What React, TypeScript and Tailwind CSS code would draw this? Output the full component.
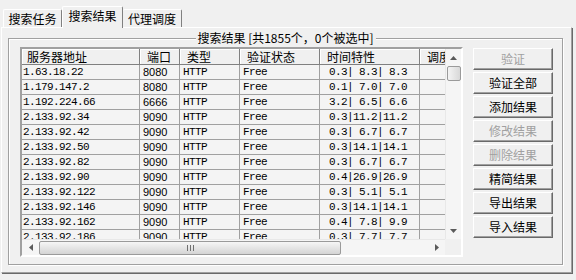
import React from 'react';

type Row = [string, string, string, string, string];

const rows: Row[] = [
  ['1.63.18.22', '8080', 'HTTP', 'Free', '0.3| 8.3| 8.3'],
  ['1.179.147.2', '8080', 'HTTP', 'Free', '0.1| 7.0| 7.0'],
  ['1.192.224.66', '6666', 'HTTP', 'Free', '3.2| 6.5| 6.6'],
  ['2.133.92.34', '9090', 'HTTP', 'Free', '0.3|11.2|11.2'],
  ['2.133.92.42', '9090', 'HTTP', 'Free', '0.3| 6.7| 6.7'],
  ['2.133.92.50', '9090', 'HTTP', 'Free', '0.3|14.1|14.1'],
  ['2.133.92.82', '9090', 'HTTP', 'Free', '0.3| 6.7| 6.7'],
  ['2.133.92.90', '9090', 'HTTP', 'Free', '0.4|26.9|26.9'],
  ['2.133.92.122', '9090', 'HTTP', 'Free', '0.3| 5.1| 5.1'],
  ['2.133.92.146', '9090', 'HTTP', 'Free', '0.3|14.1|14.1'],
  ['2.133.92.162', '9090', 'HTTP', 'Free', '0.4| 7.8| 9.9'],
  ['2.133.92.186', '9090', 'HTTP', 'Free', '0.3| 7.7| 7.7'],
];

const columns = [
  { title: '服务器地址', width: 'w-[118px]', head: 'pl-[5px]', cell: 'pl-[1px]' },
  { title: '端口', width: 'w-[40px]', head: 'pl-[7px]', cell: 'pl-[3px]' },
  { title: '类型', width: 'w-[60px]', head: 'pl-[7px]', cell: 'pl-[3px]' },
  { title: '验证状态', width: 'w-[80px]', head: 'pl-[7px]', cell: 'pl-[3px]' },
  { title: '时间特性', width: 'w-[100px]', head: 'pl-[7px]', cell: 'pl-[9px]' },
  { title: '调度', width: 'w-[60px]', head: 'pl-[7px]', cell: 'pl-[3px]' },
];

const buttons = [
  { label: '验证', disabled: true },
  { label: '验证全部' },
  { label: '添加结果' },
  { label: '修改结果', disabled: true },
  { label: '删除结果', disabled: true },
  { label: '精简结果' },
  { label: '导出结果' },
  { label: '导入结果' },
];

const mono = "font-['Liberation_Mono',monospace] text-[11px] tracking-[-0.6px]";

const Arrow = ({ dir }: { dir: 'up' | 'down' | 'left' | 'right' }) => {
  const pts = {
    up: '0,4 3.5,0 7,4',
    down: '0,0 3.5,4 7,0',
    left: '4,0 0,3.5 4,7',
    right: '0,0 4,3.5 0,7',
  }[dir];
  const vert = dir === 'up' || dir === 'down';
  return (
    <svg width={vert ? 7 : 4} height={vert ? 4 : 7} viewBox={vert ? '0 0 7 4' : '0 0 4 7'}>
      <polygon points={pts} fill="#5a5a5a" />
    </svg>
  );
};

const Cell = ({ i, children }: { i: number; children: React.ReactNode }) => {
  const c = columns[i];
  let font = mono;
  if (i === 1) font = "font-['Liberation_Sans',sans-serif] text-[11px]";
  return (
    <div
      className={`${c.width} ${c.cell} ${font} shrink-0 h-[15px] leading-[14px] border-r border-b border-[#a0a0a0] whitespace-pre overflow-hidden text-black`}
    >
      {children}
    </div>
  );
};

export default function App() {
  return (
    <div className="w-[576px] h-[280px] bg-[#f0f0f0] overflow-hidden font-['Noto_Sans_CJK_SC',sans-serif] text-[12px] leading-[14px] text-black">
      {/* tabs */}
      <div className="h-[27px] flex items-end pl-[3px]">
        <div className="h-[18px] w-[59px] flex items-center justify-center border-t border-l border-r border-t-white border-l-white border-r-[#808080] rounded-t-[2px]">
          搜索任务
        </div>
        <div className="relative z-10 -mb-px h-[22px] w-[61px] flex items-start pt-[2px] justify-center bg-[#f0f0f0] border-t border-l border-r border-t-white border-l-white border-r-[#808080] rounded-t-[2px]">
          搜索结果
        </div>
        <div className="h-[18px] w-[59px] flex items-center justify-center border-t border-r border-t-white border-r-[#808080] rounded-t-[2px]">
          代理调度
        </div>
      </div>

      {/* tab panel */}
      <div className="ml-[1px] w-[571px] h-[246px] border border-t-white border-l-white border-r-[#a0a0a0] border-b-[#a0a0a0] shadow-[1px_1px_0_#696969]">
        <div className="relative mt-[10px] ml-[6px] w-[555px] h-[227px] border border-[#a0a0a0] shadow-[inset_1px_1px_0_white,1px_1px_0_white] pl-[11px] pt-[8px] flex gap-[10px]">
          <span className="absolute -top-[8px] left-1/2 -translate-x-1/2 bg-[#f0f0f0] px-[2px] whitespace-nowrap">
            搜索结果 [共1855个，0个被选中]
          </span>

          {/* list view */}
          <div className="w-[443px] h-[210px] border-2 border-t-[#a0a0a0] border-l-[#a0a0a0] border-b-white border-r-white flex flex-col">
            <div className="h-[190px] flex">
              <div className="w-[423px] h-[190px] overflow-hidden bg-[#f4f4f4]">
                <div className="flex w-max h-[16px]">
                  {columns.map((c, i) => (
                    <div
                      key={i}
                      className={`${c.width} ${c.head} shrink-0 h-[16px] leading-[15px] border-r border-b border-[#808080] bg-[#f0f0f0] shadow-[inset_1px_1px_0_white] whitespace-nowrap overflow-hidden`}
                    >
                      {c.title}
                    </div>
                  ))}
                </div>
                {rows.map((r, ri) => (
                  <div key={ri} className="flex w-max">
                    {r.map((v, i) => (
                      <Cell key={i} i={i}>
                        {v}
                      </Cell>
                    ))}
                    <Cell i={5}>{''}</Cell>
                  </div>
                ))}
              </div>

              {/* vertical scrollbar */}
              <div className="w-[16px] h-[190px] bg-[#f5f5f5] border-l border-[#e8e8e8] flex flex-col">
                <div className="h-[17px] flex items-center justify-center">
                  <Arrow dir="up" />
                </div>
                <div className="flex-1">
                  <div className="w-[14px] h-[15px] mx-auto rounded-[2px] border border-[#9a9a9a] bg-gradient-to-r from-[#f4f4f4] to-[#d8d8d8]" />
                </div>
                <div className="h-[17px] flex items-center justify-center">
                  <Arrow dir="down" />
                </div>
              </div>
            </div>

            {/* horizontal scrollbar */}
            <div className="h-[16px] flex">
              <div className="w-[423px] h-[16px] bg-[#f5f5f5] border-t border-[#e8e8e8] flex items-center">
                <div className="w-[17px] h-full flex items-center justify-center">
                  <Arrow dir="left" />
                </div>
                <div className="w-[302px] h-[14px] rounded-[2px] border border-[#9a9a9a] bg-gradient-to-b from-[#f6f6f6] to-[#d4d4d4] flex items-center justify-center gap-[2px]">
                  <span className="w-px h-[6px] bg-[#707070]" />
                  <span className="w-px h-[6px] bg-[#707070]" />
                  <span className="w-px h-[6px] bg-[#707070]" />
                </div>
                <div className="flex-1" />
                <div className="w-[17px] h-full flex items-center justify-center">
                  <Arrow dir="right" />
                </div>
              </div>
              <div className="w-[16px] h-[16px] bg-[#f0f0f0]" />
            </div>
          </div>

          {/* buttons */}
          <div className="pt-[1px] flex flex-col gap-[2px]">
            {buttons.map((b) => (
              <button
                key={b.label}
                className={`h-[22px] w-[80px] flex items-center justify-center border border-t-white border-l-white border-r-[#696969] border-b-[#696969] shadow-[inset_-1px_-1px_0_#a0a0a0] bg-[#f0f0f0] text-[12px] leading-[14px] ${
                  b.disabled ? 'text-[#a0a0a0]' : 'text-black'
                }`}
              >
                {b.label}
              </button>
            ))}
          </div>
        </div>
      </div>
    </div>
  );
}
